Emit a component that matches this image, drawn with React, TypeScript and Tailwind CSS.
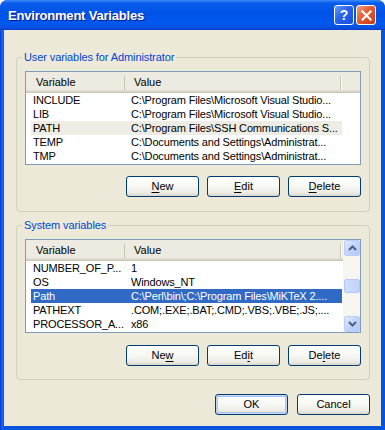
import clsx from 'clsx';
import type { ReactNode } from 'react';

type Row = { name: string; value: string; selected?: 'active' | 'inactive' };

const USER_VARS: Row[] = [
  { name: 'INCLUDE', value: 'C:\\Program Files\\Microsoft Visual Studio...' },
  { name: 'LIB', value: 'C:\\Program Files\\Microsoft Visual Studio...' },
  { name: 'PATH', value: 'C:\\Program Files\\SSH Communications S...', selected: 'inactive' },
  { name: 'TEMP', value: 'C:\\Documents and Settings\\Administrat...' },
  { name: 'TMP', value: 'C:\\Documents and Settings\\Administrat...' },
];

const SYSTEM_VARS: Row[] = [
  { name: 'NUMBER_OF_P...', value: '1' },
  { name: 'OS', value: 'Windows_NT' },
  { name: 'Path', value: 'C:\\Perl\\bin\\;C:\\Program Files\\MiKTeX 2....', selected: 'active' },
  { name: 'PATHEXT', value: '.COM;.EXE;.BAT;.CMD;.VBS;.VBE;.JS;....' },
  { name: 'PROCESSOR_A...', value: 'x86' },
];

function XPButton({ children, isDefault, className }: { children: ReactNode; isDefault?: boolean; className?: string }) {
  return (
    <button
      className={clsx(
        'flex h-[21px] w-[73px] items-center justify-center rounded-[3px] border border-[#003C74] text-[11px] leading-none text-black',
        'bg-[linear-gradient(to_bottom,#ffffff_0%,#f6f6f2_55%,#ebe9e1_85%,#d9d5ca_100%)]',
        isDefault && 'shadow-[inset_0_0_0_1px_#C6D8F6,inset_0_0_0_2px_#A9C3EE]',
        className,
      )}
    >
      {children}
    </button>
  );
}

function Key({ children }: { children: ReactNode }) {
  return <span className="underline decoration-1 underline-offset-[2px]">{children}</span>;
}

function Chevron({ up }: { up?: boolean }) {
  return (
    <svg width="9" height="6" viewBox="0 0 9 6">
      <polyline
        points={up ? '1,5 4.5,1.5 8,5' : '1,1 4.5,4.5 8,1'}
        fill="none"
        stroke="#4D6185"
        strokeWidth="2"
      />
    </svg>
  );
}

function ScrollButton({ up }: { up?: boolean }) {
  return (
    <div className="flex h-[16px] items-center justify-center rounded-[2px] border border-[#BCCEF8] bg-[linear-gradient(135deg,#E1EAFE_0%,#C3D4FC_50%,#B3C8F7_100%)]">
      <Chevron up={up} />
    </div>
  );
}

function ScrollBar() {
  return (
    <div className="flex w-[17px] flex-col bg-[#F6F5F0] pl-[1px]">
      <ScrollButton up />
      <div className="flex-1">
        <div className="mt-[23px] h-[14px] rounded-[2px] border border-[#B4C8F6] bg-[linear-gradient(to_right,#D0DDFB,#C2D3FB)]" />
      </div>
      <ScrollButton />
    </div>
  );
}

function ListView({ rows, scroll }: { rows: Row[]; scroll?: boolean }) {
  return (
    <div className="flex h-[94px] overflow-hidden border border-[#7F9DB9] bg-white">
      <div className="flex min-w-0 flex-1 flex-col">
        <div className="flex h-[21px] shrink-0 items-center bg-[#EDEBE1] text-[11px] text-black shadow-[inset_0_-1px_0_#CBC7B8,inset_0_-2px_0_#D8D5C6,inset_0_-3px_0_#E3E0D1]">
          <div className="w-[98px] pl-[10px]">Variable</div>
          <div className="h-[14px] w-[1px] bg-[#C7C5B2]" />
          <div className="w-[215px] pl-[9px]">Value</div>
          <div className="h-[14px] w-[1px] bg-[#C7C5B2]" />
          <div className="h-[14px] w-[1px] bg-white" />
        </div>
        <div className="flex flex-col">
          {rows.map((r) => (
            <div key={r.name} className="flex h-[14px] pl-[5px] text-[11px] leading-[14px] tracking-[-0.15px]">
              <div
                className={clsx(
                  'flex w-[311px]',
                  r.selected === 'active' && 'bg-[#316AC5] text-white',
                  r.selected === 'inactive' && 'bg-[#EEEDE5] text-black',
                  !r.selected && 'text-black',
                )}
              >
                <div className="w-[94px] overflow-hidden whitespace-nowrap pl-[2px]">{r.name}</div>
                <div className="flex-1 overflow-hidden whitespace-nowrap pl-[6px]">{r.value}</div>
              </div>
            </div>
          ))}
        </div>
      </div>
      {scroll && <ScrollBar />}
    </div>
  );
}

function GroupBox({ legend, children, className }: { legend: ReactNode; children: ReactNode; className?: string }) {
  return (
    <fieldset className={clsx('rounded-[4px] border border-[#D0D0BF] px-0', className)}>
      <legend className="ml-[5px] px-[2px] text-[11px] leading-[13px] tracking-[-0.1px] text-[#0046D5]">{legend}</legend>
      <div className="px-[8px] pt-[7px]">{children}</div>
    </fieldset>
  );
}

function TitleBar() {
  return (
    <div className="flex h-[30px] shrink-0 items-center rounded-t-[7px] bg-[linear-gradient(to_bottom,#3B8CF8_0%,#0A5CEC_10%,#0052E7_45%,#0058EE_80%,#0A4EDC_94%,#0638C8_100%)] pl-[8px] pr-[9px]">
      <span className="flex-1 pt-[1px] text-[13px] font-bold tracking-[-0.2px] text-white [text-shadow:1px_1px_0_#0A1883]">
        Environment Variables
      </span>
      <div className="flex gap-[2px]">
        <div className="flex h-[20px] w-[20px] items-center justify-center rounded-[3px] border border-white bg-[linear-gradient(135deg,#6A9CF9_0%,#2861EC_45%,#1A4FDD_100%)] text-[14px] font-bold leading-none text-white">
          ?
        </div>
        <div className="flex h-[20px] w-[20px] items-center justify-center rounded-[3px] border border-white bg-[linear-gradient(135deg,#F2A388_0%,#E35A2E_45%,#CC3D14_100%)]">
          <svg width="11" height="11" viewBox="0 0 11 11">
            <path d="M1.5 1.5 L9.5 9.5 M9.5 1.5 L1.5 9.5" stroke="white" strokeWidth="2.2" strokeLinecap="square" />
          </svg>
        </div>
      </div>
    </div>
  );
}

export default function App() {
  return (
    <div className="h-[430px] w-[385px] bg-white font-['Liberation_Sans',Arial,sans-serif]">
      <div className="flex h-full flex-col rounded-t-[8px] bg-[linear-gradient(to_right,#0831D9_0px,#166AEE_2px,#0855DD_4px)]">
        <TitleBar />
        <div className="mx-[4px] mb-[4px] flex flex-1 flex-col bg-[#ECE9D8] pl-[12px] pr-[11px] pt-[21px]">
          <GroupBox legend="User variables for Administrator" className="pb-[14px]">
            <ListView rows={USER_VARS} />
            <div className="mt-[11px] flex justify-end gap-[8px]">
              <XPButton><Key>N</Key>ew</XPButton>
              <XPButton><Key>E</Key>dit</XPButton>
              <XPButton><Key>D</Key>elete</XPButton>
            </div>
          </GroupBox>

          <GroupBox legend="System variables" className="mt-[7px] pb-[13px]">
            <ListView rows={SYSTEM_VARS} scroll />
            <div className="mt-[12px] flex justify-end gap-[8px]">
              <XPButton>Ne<Key>w</Key></XPButton>
              <XPButton>Ed<Key>i</Key>t</XPButton>
              <XPButton>De<Key>l</Key>ete</XPButton>
            </div>
          </GroupBox>

          <div className="mt-[14px] flex justify-end gap-[9px]">
            <XPButton isDefault>OK</XPButton>
            <XPButton>Cancel</XPButton>
          </div>
        </div>
      </div>
    </div>
  );
}
